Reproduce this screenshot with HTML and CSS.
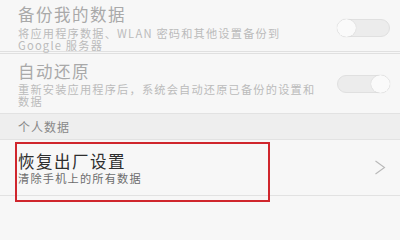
FILE: index.html
```html
<!DOCTYPE html>
<html lang="zh-CN">
<head>
<meta charset="utf-8">
<link rel="stylesheet" href="styles.css">
</head>
<body>
<div class="screen">
  <div class="item item-backup">
    <div class="text">
      <div class="title disabled">备份我的数据</div>
      <div class="sub disabled">将应用程序数据、WLAN 密码和其他设置备份到<br>Google 服务器</div>
    </div>
    <div class="toggle"><span class="knob"></span></div>
  </div>
  <div class="item item-restore">
    <div class="text">
      <div class="title disabled">自动还原</div>
      <div class="sub disabled">重新安装应用程序后，系统会自动还原已备份的设置和<br>数据</div>
    </div>
    <div class="toggle on"><span class="knob"></span></div>
  </div>
  <div class="section">个人数据</div>
  <div class="item item-reset">
    <div class="text">
      <div class="title">恢复出厂设置</div>
      <div class="sub">清除手机上的所有数据</div>
    </div>
    <svg class="chevron" width="12" height="15" viewBox="0 0 12 15"><path d="M1.5 1 L10.5 7.5 L1.5 14" fill="none" stroke="#b8b8b8" stroke-width="1.1"/></svg>
    <div class="highlight"></div>
  </div>
</div>
</body>
</html>
```
FILE: styles.css
```css
*, *::before, *::after {
  box-sizing: border-box;
}
html, body {
  margin: 0;
  padding: 0;
}
body {
  background: #f7f7f7;
  font-family: "Noto Sans CJK SC", "Noto Sans", sans-serif;
}
.screen {
  width: 400px;
  height: 212px;
  overflow: hidden;
  position: relative;
}
.item {
  display: flex;
  align-items: center;
  padding: 0 10px 0 18px;
  border-bottom: 1px solid #e2e2e2;
  position: relative;
}
.item-backup {
  padding-top: 4px;
  padding-bottom: 0;
  border-bottom: 3px double #e0e0e0;
}
.item-restore {
  padding-top: 7px;
  padding-bottom: 6px;
}
.item-reset {
  padding-top: 11px;
  padding-bottom: 11px;
  padding-right: 14px;
}
.text {
  flex: 1;
}
.title {
  font-size: 16.5px;
  line-height: 20px;
  letter-spacing: 1.5px;
  color: #2e2e2e;
  white-space: nowrap;
}
.sub {
  font-size: 11.2px;
  line-height: 12px;
  letter-spacing: 1.2px;
  color: #6c6c6c;
  margin-top: 2px;
  white-space: nowrap;
}
.item-backup .sub {
  margin-top: 3px;
}
.item-reset .sub {
  margin-top: 1px;
}
.title.disabled {
  color: #a9a9a9;
}
.sub.disabled {
  color: #bbbbbb;
}
.toggle {
  width: 53px;
  height: 18px;
  border: 1px solid #e0e0e0;
  border-radius: 9px;
  background: #ececec;
  position: relative;
  flex: none;
}
.knob {
  position: absolute;
  left: -1px;
  top: -1px;
  width: 19px;
  height: 18px;
  border-radius: 50%;
  background: #fafafa;
  box-shadow: 0 0 1px rgba(0,0,0,0.2);
}
.toggle.on .knob {
  left: auto;
  right: -1px;
}
.section {
  height: 26px;
  line-height: 25px;
  padding-left: 18px;
  background: #eeeeee;
  color: #888888;
  font-size: 12px;
  letter-spacing: 1px;
  border-bottom: 1px solid #e2e2e2;
}
.chevron {
  flex: none;
}
.highlight {
  position: absolute;
  left: 15px;
  top: 2px;
  width: 255px;
  height: 60px;
  border: 2px solid #d0262d;
  pointer-events: none;
}
```
